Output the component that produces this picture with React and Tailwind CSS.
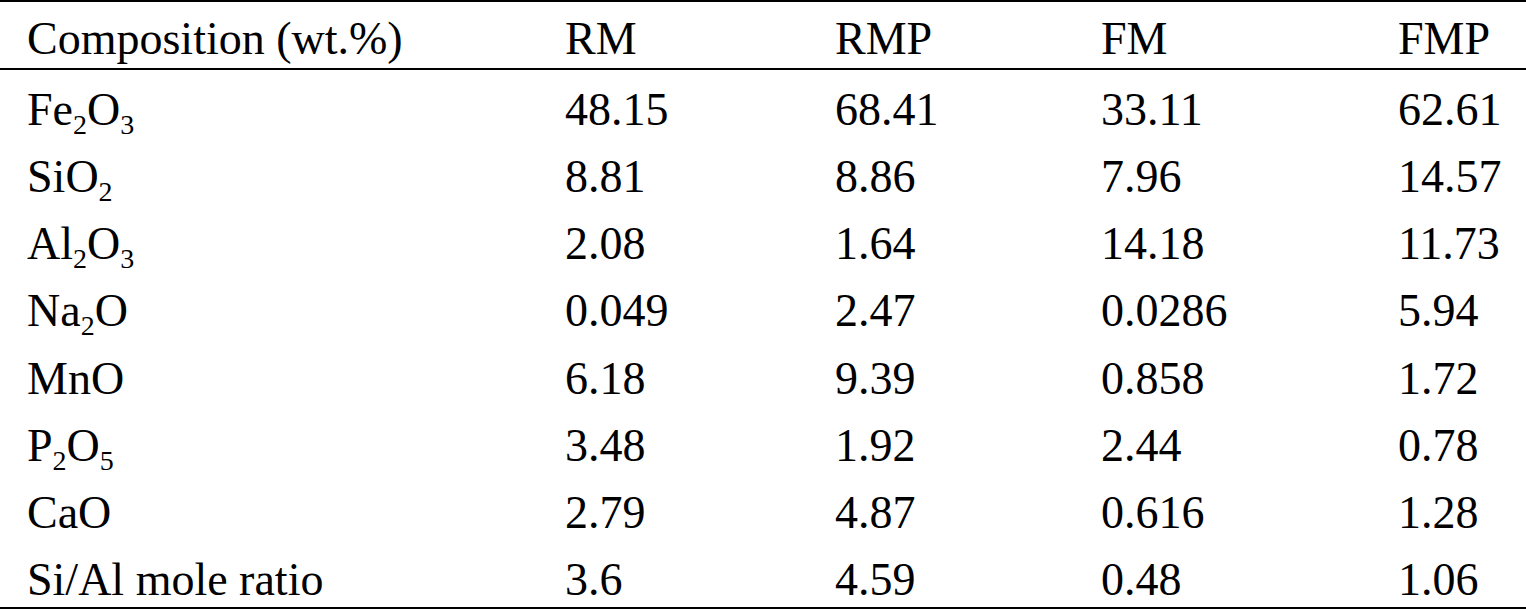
const COLS = ["RM", "RMP", "FM", "FMP"];

const ROWS = [
  { name: ["Fe", "2", "O", "3"], vals: ["48.15", "68.41", "33.11", "62.61"] },
  { name: ["Si", null, "O", "2"], vals: ["8.81", "8.86", "7.96", "14.57"] },
  { name: ["Al", "2", "O", "3"], vals: ["2.08", "1.64", "14.18", "11.73"] },
  { name: ["Na", "2", "O", null], vals: ["0.049", "2.47", "0.0286", "5.94"] },
  { name: ["MnO", null, null, null], vals: ["6.18", "9.39", "0.858", "1.72"] },
  { name: ["P", "2", "O", "5"], vals: ["3.48", "1.92", "2.44", "0.78"] },
  { name: ["CaO", null, null, null], vals: ["2.79", "4.87", "0.616", "1.28"] },
  { name: ["Si/Al mole ratio", null, null, null], vals: ["3.6", "4.59", "0.48", "1.06"] },
];

// chemistry formula with small lowered digits
function Formula({ parts }) {
  return (
    <>
      {parts.map((p, i) =>
        p == null ? null : i % 2 === 1 ? (
          <span key={i} className="relative top-[9px] text-[28px] leading-none">
            {p}
          </span>
        ) : (
          <span key={i}>{p}</span>
        )
      )}
    </>
  );
}

function Row({ first, cells, header }) {
  return (
    <div
      className={`grid grid-cols-[565px_270px_266px_297px_1fr] ${
        header ? "h-[66px] pt-[14px]" : "h-[67.125px] pt-[17px]"
      }`}
    >
      <div className="pl-[27px] whitespace-nowrap">{first}</div>
      {cells.map((c, i) => (
        <div key={i} className="whitespace-nowrap">
          {c}
        </div>
      ))}
    </div>
  );
}

export default function App() {
  return (
    <div className="w-[1526px] h-[610px] bg-white text-black text-[46px] leading-[46px] font-['Liberation_Serif','DejaVu_Serif',serif]">
      <div className="border-t-2 border-b-2 border-black">
        <div className="border-b-2 border-black">
          <Row header first="Composition (wt.%)" cells={COLS} />
        </div>
        {ROWS.map((r, i) => (
          <Row key={i} first={<Formula parts={r.name} />} cells={r.vals} />
        ))}
      </div>
    </div>
  );
}
